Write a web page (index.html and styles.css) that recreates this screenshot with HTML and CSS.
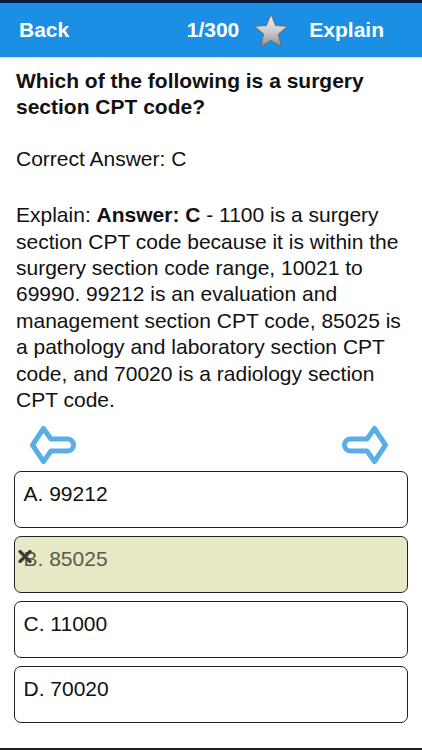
FILE: index.html
```html
<!DOCTYPE html>
<html>
<head>
<meta charset="utf-8">
<link rel="stylesheet" href="styles.css">
</head>
<body>
<header class="topbar">
  <span class="back">Back</span>
  <div class="right">
    <span class="count">1/300</span>
    <svg class="star" width="36" height="36" viewBox="0 0 36 36">
      <defs>
        <linearGradient id="sg" x1="0" y1="0" x2="0" y2="1">
          <stop offset="0" stop-color="#f4f4f4"/>
          <stop offset="0.55" stop-color="#c8c8c8"/>
          <stop offset="1" stop-color="#8e8e8e"/>
        </linearGradient>
      </defs>
      <polygon points="18,1.5 22.6,12.5 34.5,13.3 25.4,21.1 28.3,33.8 18,27.4 7.7,33.8 10.6,21.1 1.5,13.3 13.4,12.5" fill="url(#sg)" stroke="#6d6d6d" stroke-width="1" stroke-linejoin="round"/>
    </svg>
    <span class="explain-btn">Explain</span>
  </div>
</header>
<main class="content">
  <p class="question">Which of the following is a surgery section CPT code?</p>
  <p class="correct">Correct Answer: C</p>
  <p class="explain">Explain: <b>Answer: C</b> - 1100 is a surgery section CPT code because it is within the surgery section code range, 10021 to 69990. 99212 is an evaluation and management section CPT code, 85025 is a pathology and laboratory section CPT code, and 70020 is a radiology section CPT code.</p>
</main>
<div class="arrows">
  <svg class="arrow" width="47" height="42" viewBox="0 0 47 42">
    <path d="M3.5 21 L14.5 4.5 L22 15 L38.5 15 A6 6 0 0 1 38.5 27 L22 27 L14.5 37.5 Z" fill="#fff" stroke="#5aaee8" stroke-width="5" stroke-linejoin="round"/>
  </svg>
  <svg class="arrow" width="47" height="42" viewBox="0 0 47 42">
    <path d="M43.5 21 L32.5 4.5 L25 15 L8.5 15 A6 6 0 0 0 8.5 27 L25 27 L32.5 37.5 Z" fill="#fff" stroke="#5aaee8" stroke-width="5" stroke-linejoin="round"/>
  </svg>
</div>
<ul class="options">
  <li class="option">A. 99212</li>
  <li class="option wrong">
    <svg class="xmark" width="14" height="13" viewBox="0 0 14 13">
      <path d="M2 1.5 L12 11.5 M12 1.5 L2 11.5" stroke="#3c3c38" stroke-width="3.2" stroke-linecap="round"/>
    </svg>B. 85025</li>
  <li class="option">C. 11000</li>
  <li class="option">D. 70020</li>
</ul>
<div class="bottomline"></div>
</body>
</html>
```
FILE: styles.css
```css
html, body {
  margin: 0;
  padding: 0;
  background: #fff;
  width: 422px;
  height: 750px;
  overflow: hidden;
}
body {
  font-family: "Liberation Sans", Arial, sans-serif;
  color: #111;
  display: flex;
  flex-direction: column;
}
.topbar {
  height: 54px;
  background: #1a8fe3;
  border-top: 3px solid #0b1c3c;
  border-bottom: 1px solid #cfe6f8;
  display: flex;
  align-items: center;
  justify-content: space-between;
  padding: 0 38px 0 19px;
  color: #fff;
  font-size: 21px;
  font-weight: bold;
  flex: none;
}
.right {
  display: flex;
  align-items: center;
}
.count {
  margin-right: 14px;
}
.star {
  margin-right: 20px;
  margin-top: 1px;
}
.content {
  padding: 0 16px;
  flex: none;
}
.content p {
  margin: 0;
  font-size: 21px;
  line-height: 26.4px;
}
.question {
  font-weight: bold;
  margin-top: 9.5px !important;
}
.correct {
  margin-top: 26px !important;
}
.explain {
  margin-top: 29.5px !important;
}
.explain b {
  font-weight: bold;
}
.arrows {
  display: flex;
  justify-content: space-between;
  padding: 11px 33px 0 29px;
  height: 42px;
  margin-bottom: 5px;
  flex: none;
}
.options {
  list-style: none;
  margin: 0;
  padding: 0 14px;
  display: flex;
  flex-direction: column;
  gap: 8px;
}
.option {
  position: relative;
  border: 1.5px solid #222;
  border-radius: 7px;
  padding: 10px 9px 0 8.5px;
  box-sizing: border-box;
  height: 57px;
  font-size: 21px;
  line-height: 24px;
  color: #111;
}
.option.wrong {
  background: #e7e8c5;
  color: #5a5a48;
}
.xmark {
  position: absolute;
  left: 2.5px;
  top: 12.5px;
}
.bottomline {
  margin-top: auto;
  height: 2px;
  background: #222;
}
```
